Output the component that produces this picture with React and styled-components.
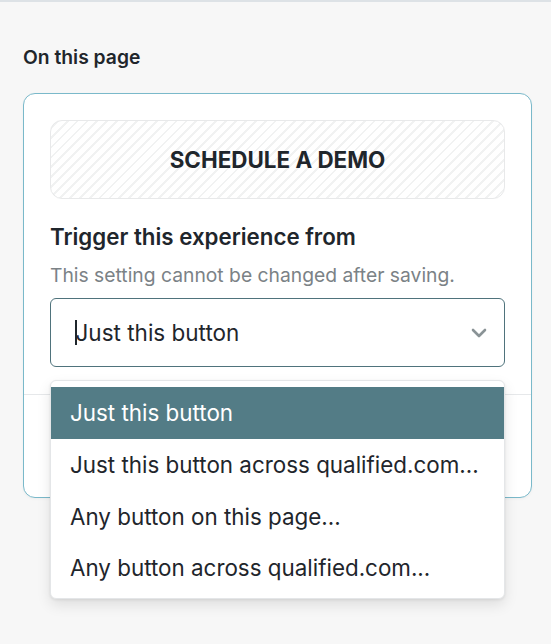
import React from "react";
import styled, { createGlobalStyle } from "styled-components";

const Global = createGlobalStyle`
  html, body { margin: 0; padding: 0; }
  body {
    background: #f7f7f7;
    font-family: Inter, "Noto Sans", sans-serif;
    color: #1f262c;
    -webkit-font-smoothing: antialiased;
  }
`;

const Page = styled.div`
  min-height: 644px;
  box-sizing: border-box;
  border-top: 2px solid #dde2e6;
  padding: 44px 20px 0 23px;
`;

const PageTitle = styled.h2`
  margin: 0 0 25px;
  font-size: 19.3px;
  line-height: 22px;
  font-weight: 600;
  color: #1f262c;
`;

const Card = styled.div`
  width: 509px;
  box-sizing: border-box;
  background: #fff;
  border: 1px solid #7ab9ca;
  border-radius: 12px;
  box-shadow: 0 1px 3px rgba(0, 0, 0, 0.04);
`;

const CardBody = styled.div`
  position: relative;
  padding: 26px 26px 27px 26px;
  border-bottom: 1px solid #e6e8ea;
`;

const CardFooter = styled.div`
  height: 102px;
`;

const Placeholder = styled.div`
  height: 79px;
  box-sizing: border-box;
  border: 1px solid #e8e9ea;
  border-radius: 12px;
  display: flex;
  align-items: center;
  justify-content: center;
  background: repeating-linear-gradient(
    -45deg,
    #ffffff 0px,
    #ffffff 5px,
    #f1f2f2 5px,
    #f1f2f2 7px
  );
  font-size: 22.4px;
  font-weight: 700;
  color: #1f262c;
`;

const Label = styled.div`
  margin-top: 25px;
  font-size: 22.3px;
  line-height: 26px;
  font-weight: 600;
  color: #1f262c;
`;

const Hint = styled.div`
  margin-top: 13px;
  font-size: 19.3px;
  line-height: 24px;
  color: #7b8286;
`;

const Select = styled.div`
  margin-top: 11px;
  height: 69px;
  box-sizing: border-box;
  border: 1px solid #4f737c;
  border-radius: 6px;
  display: flex;
  align-items: center;
  padding: 0 17px 0 24px;
  font-size: 22.5px;
  color: #1f262c;
`;

const Value = styled.span`
  flex: 1;
  display: flex;
  align-items: center;
`;

const Caret = styled.span`
  display: inline-block;
  width: 1.5px;
  height: 25px;
  background: #1f262c;
  margin-right: -1px;
`;

const Menu = styled.ul`
  position: absolute;
  left: 26px;
  right: 26px;
  top: 286px;
  margin: 0;
  padding: 6px 0 4px;
  list-style: none;
  background: #fff;
  border: 1px solid #e4e6e8;
  border-radius: 6px;
  box-shadow: 0 6px 14px rgba(0, 0, 0, 0.1), 0 1px 3px rgba(0, 0, 0, 0.08);
  z-index: 2;
`;

const Option = styled.li`
  height: 51.7px;
  display: flex;
  align-items: center;
  padding: 0 19px;
  font-size: 22.4px;
  color: ${(p) => (p.$active ? "#ffffff" : "#1f262c")};
  background: ${(p) => (p.$active ? "#537c86" : "transparent")};
`;

const options = [
  "Just this button",
  "Just this button across qualified.com...",
  "Any button on this page...",
  "Any button across qualified.com...",
];

export default function App() {
  return (
    <>
      <Global />
      <Page>
        <PageTitle>On this page</PageTitle>
        <Card>
          <CardBody>
            <Placeholder>SCHEDULE A DEMO</Placeholder>
            <Label>Trigger this experience from</Label>
            <Hint>This setting cannot be changed after saving.</Hint>
            <Select>
              <Value>
                <Caret />
                Just this button
              </Value>
              <svg width="16" height="10" viewBox="0 0 16 10" fill="none">
                <path
                  d="M2 2l6 6 6-6"
                  stroke="#8a9396"
                  strokeWidth="2.6"
                  strokeLinecap="round"
                  strokeLinejoin="round"
                />
              </svg>
            </Select>
            <Menu>
              {options.map((o, i) => (
                <Option key={o} $active={i === 0}>
                  {o}
                </Option>
              ))}
            </Menu>
          </CardBody>
          <CardFooter />
        </Card>
      </Page>
    </>
  );
}
